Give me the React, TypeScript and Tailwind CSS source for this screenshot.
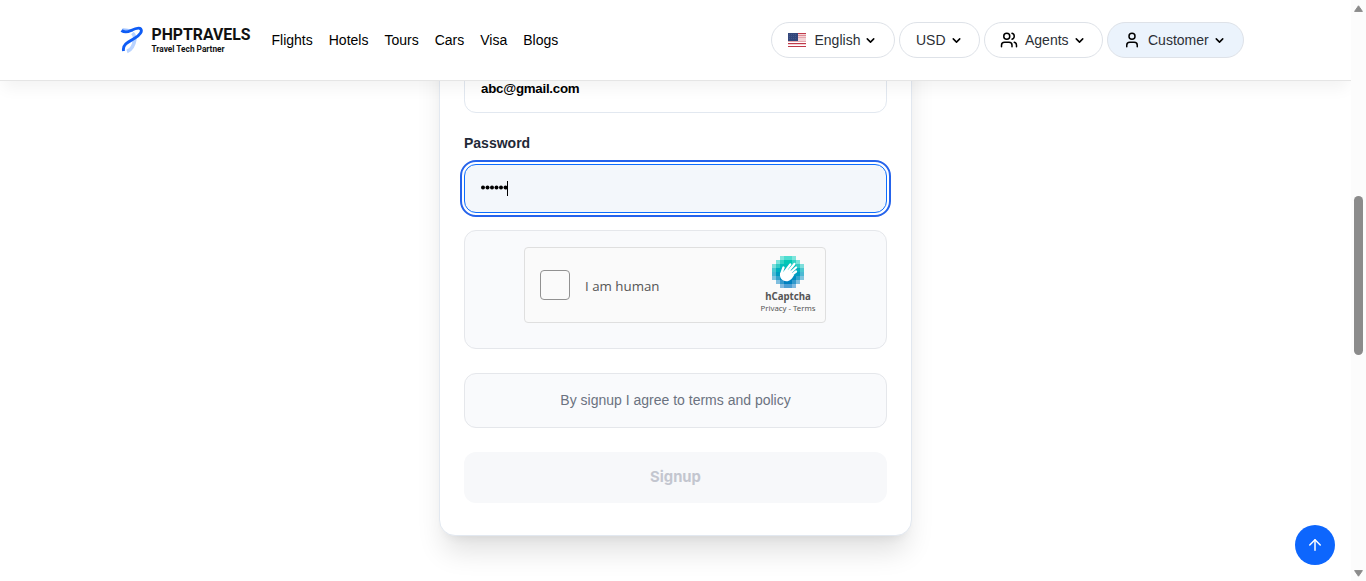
import { ArrowUp, ChevronDown, User, Users } from "lucide-react";
import type { ReactNode } from "react";

const navItems = ["Flights", "Hotels", "Tours", "Cars", "Visa", "Blogs"];

const captchaPixels = [
  ["", "", "#7fe5dc", "#4dddd0", "#4dddd0", "#7fe5dc", "", ""],
  ["", "#7be3db", "#33d3c6", "#00c8b6", "#00c8b6", "#33d3c6", "#7be3db", ""],
  ["#7fdfdc", "#33ccc6", "#00bfbb", "#00bfbb", "#00bfbb", "#00bfbb", "#33ccc6", "#7fdfdc"],
  ["#4dc8d0", "#00b0bf", "#00b0bf", "#00b0bf", "#00b0bf", "#00b0bf", "#00b0bf", "#4dc8d0"],
  ["#4db9d3", "#009cc0", "#009cc0", "#009cc0", "#009cc0", "#009cc0", "#009cc0", "#4db9d3"],
  ["#80c5df", "#33a3cc", "#008bbf", "#008bbf", "#008bbf", "#008bbf", "#33a3cc", "#80c5df"],
  ["", "#80bfdf", "#3399cc", "#0080bf", "#0080bf", "#3399cc", "#80bfdf", ""],
  ["", "", "#80b9df", "#4d9ed3", "#4d9ed3", "#80b9df", "", ""],
];

function BrandMark() {
  return (
    <svg width="24" height="28" viewBox="0 0 24 28" fill="none" className="shrink-0">
      <path d="M12.500 7C15.500 10 15.500 13 13.500 17M15 13C14 19 11.500 24 7 25.500" stroke="#b9d3ff" strokeWidth="3.600" />
      <path d="M2.500 3.500C6 3.500 9 4.500 13 4.500" stroke="#9fc2ff" strokeWidth="2.400" />
      <path
        d="M1.400 4.500C5 7 8 6 11 4.500C15 2.500 19 0.800 20.800 3C22.500 5.500 20 9 15 12C9 15.500 2 18.500 3.600 25"
        stroke="#0f5cf5"
        strokeWidth="2.900"
        strokeLinejoin="round"
      />
    </svg>
  );
}

function Flag() {
  return (
    <svg width="18" height="14" viewBox="0 0 18 14" shapeRendering="crispEdges">
      <rect width="18" height="14" fill="#f3d3d6" />
      {[0, 4, 8, 10, 13].map((y) => (
        <rect key={y} y={y} width="18" height="1" fill={y === 4 || y === 8 ? "#e5a8ae" : "#c0394a"} />
      ))}
      <rect y="2" width="18" height="1" fill="#dd8b94" />
      <rect y="9" width="18" height="1" fill="#fff" />
      <rect y="12" width="18" height="1" fill="#fff" />
      <rect width="10" height="8" fill="#33477b" />
      {[1, 3, 5].map((y) =>
        [1, 3, 5, 7].map((x) => <rect key={`${x}-${y}`} x={x} y={y} width="1" height="1" fill="#43568a" />),
      )}
    </svg>
  );
}

function CaptchaLogo() {
  return (
    <svg width="32" height="32" viewBox="0 0 32 32">
      <g shapeRendering="crispEdges">
        {captchaPixels.map((row, y) =>
          row.map((c, x) => (c ? <rect key={`${x}-${y}`} x={x * 4} y={y * 4} width="4" height="4" fill={c} /> : null)),
        )}
      </g>
      <g stroke="#fff" strokeLinecap="round" strokeWidth="2.300" fill="none">
        <path d="M12 17L18.300 8.400" />
        <path d="M14 18L22.400 8" />
        <path d="M16 19L24 11.500" />
        <path d="M17 21L24 15.500" />
        <path d="M9.200 18L11.500 11.500" />
      </g>
      <path
        d="M8.200 17C7 21 10 25.300 14.500 25.300C18 25.300 20 22.500 22 19.500L19 14.500L14.500 13.500L11 16Z"
        fill="#fff"
      />
    </svg>
  );
}

function PillButton({ className, icon, label }: { className: string; icon?: ReactNode; label: string }) {
  return (
    <button
      className={`flex h-9 items-center rounded-[18px] border border-[#dee2e8] text-sm text-[#2b2f36] ${className}`}
    >
      {icon}
      <span>{label}</span>
      <ChevronDown size={13} strokeWidth={2.8} className="ml-1 text-black" />
    </button>
  );
}

function Header() {
  return (
    <header className="relative z-10 flex h-[81px] shrink-0 items-center border-b border-[#e5e5e5] bg-white pr-[107px] pl-[120px] shadow-[0_10px_15px_-3px_rgba(0,0,0,0.05)]">
      <a className="flex w-[151.500px] items-center gap-[7.500px]">
        <BrandMark />
        <span className="flex flex-col pt-px font-[Roboto,sans-serif] font-bold whitespace-nowrap text-[#111]">
          <span className="text-[15.800px] leading-[17px]">PHPTRAVELS</span>
          <span className="text-[8.300px] leading-[12px]">Travel Tech Partner</span>
        </span>
      </a>
      <nav className="flex gap-4 text-sm text-black">
        {navItems.map((item) => (
          <a key={item}>{item}</a>
        ))}
      </nav>
      <div className="ml-auto flex gap-1">
        <PillButton
          className="w-[124px] pl-4"
          icon={
            <span className="mr-[8.500px]">
              <Flag />
            </span>
          }
          label="English"
        />
        <PillButton className="w-[81px] pl-4" label="USD" />
        <PillButton className="w-[119px] pl-[15px]" icon={<Users size={18} className="mr-[7px] text-black" />} label="Agents" />
        <PillButton
          className="w-[137px] bg-[#ebf3fc] pl-[15px]"
          icon={<User size={18} className="mr-[7px] text-black" />}
          label="Customer"
        />
      </div>
    </header>
  );
}

function Captcha() {
  return (
    <div className="mt-[17px] flex h-[119px] shrink-0 justify-center rounded-xl border border-[#e5e7eb] bg-[#f9fafc] pt-4">
      <div className="mr-px flex h-[76px] w-[302px] items-center rounded border border-[#dfdfdf] bg-[#fafafa] font-['Noto_Sans',sans-serif] text-[#555]">
        <span className="ml-[15px] size-[30px] rounded border border-[#919191] bg-[#fafafa]" />
        <span className="ml-[15px] pt-[3px] font-['Open_Sans',sans-serif] text-[13.300px]">I am human</span>
        <div className="mr-[9.500px] ml-auto flex flex-col items-center">
          <CaptchaLogo />
          <span className="mt-0.5 text-[9.700px] leading-[13px] font-bold">hCaptcha</span>
          <span className="text-[7.800px] leading-[11px] whitespace-nowrap">Privacy - Terms</span>
        </div>
      </div>
    </div>
  );
}

function SignupCard() {
  return (
    <section className="-mt-20 flex h-[535px] w-[473px] shrink-0 flex-col rounded-2xl border border-[#e2e8f0] bg-white px-6 shadow-[0_20px_28px_-5px_rgba(0,0,0,0.12),0_8px_10px_-6px_rgba(0,0,0,0.06)]">
      <div className="mt-[62px] flex h-[49px] shrink-0 items-center rounded-xl border border-[#e2e8f0] px-4 text-[13.300px] font-bold tracking-[-0.250px] text-black">
        abc@gmail.com
      </div>
      <label className="mt-5 text-sm leading-5 font-bold text-[#1f2937]">Password</label>
      <div className="mt-[11px] flex h-[49px] shrink-0 items-center rounded-xl border border-[#0d6efd] bg-[#f3f7fb] px-4 outline-2 outline-offset-2 outline-[#2563eb]">
        <svg width="26" height="5" viewBox="0 0 26 5" className="mb-0.5">
          {[0, 1, 2, 3, 4, 5].map((i) => (
            <circle key={i} cx={2 + i * 4.5} cy="2.5" r="2" />
          ))}
        </svg>
        <span className="h-[15px] w-px bg-black" />
      </div>
      <Captcha />
      <div className="mt-6 flex h-[55px] shrink-0 items-center justify-center rounded-xl border border-[#e5e7eb] bg-[#f9fafc] pb-0.5 text-sm text-[#6b7280]">
        By signup I agree to terms and policy
      </div>
      <button className="mt-6 h-[51px] shrink-0 rounded-xl bg-[#f7f8fa] font-[Inter,sans-serif] text-[14.800px] font-bold text-[#c3c6cf]">
        Signup
      </button>
    </section>
  );
}

function Scrollbar() {
  return (
    <div className="flex w-[15px] shrink-0 flex-col items-center bg-[#fcfcfc] pt-[5px] pb-1">
      <svg width="9" height="7" viewBox="0 0 9 7">
        <path d="M4.500 0.800L8.400 6.400H0.600Z" fill="#8b8b8b" stroke="#8b8b8b" strokeLinejoin="round" />
      </svg>
      <div className="mt-[184px] h-[159px] w-[9px] rounded-full bg-[#8b8b8b]" />
      <svg width="9" height="7" viewBox="0 0 9 7" className="mt-auto">
        <path d="M4.500 6.200L8.400 0.600H0.600Z" fill="#8b8b8b" stroke="#8b8b8b" strokeLinejoin="round" />
      </svg>
    </div>
  );
}

export default function App() {
  return (
    <div className="flex h-[581px] w-[1366px] overflow-hidden bg-white font-['Liberation_Sans',Arial,sans-serif]">
      <div className="relative flex w-[1351px] flex-col overflow-hidden">
        <Header />
        <main className="flex flex-1 flex-col items-center overflow-hidden">
          <SignupCard />
        </main>
        <button className="absolute right-4 bottom-4 flex size-10 items-center justify-center rounded-full bg-[#0d66fd] text-white">
          <ArrowUp size={18} strokeWidth={2} />
        </button>
      </div>
      <Scrollbar />
    </div>
  );
}
